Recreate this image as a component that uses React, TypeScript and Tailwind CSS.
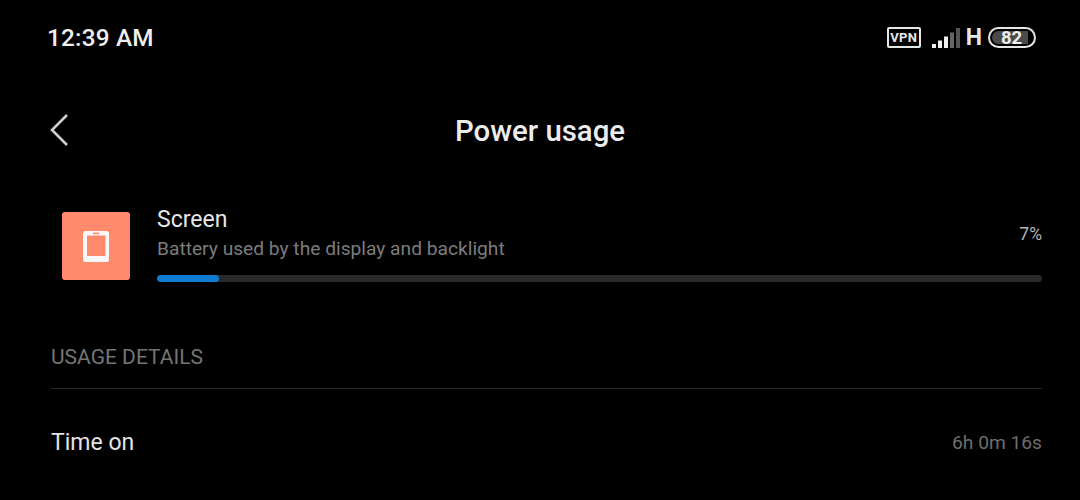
export default function App() {
  return (
    <div className="w-[1080px] h-[500px] overflow-hidden bg-black text-white flex flex-col font-['Roboto',sans-serif]">
      <div className="h-[75px] flex items-center justify-between pl-[47px] pr-[44px]">
        <span className="text-[24.3px] font-medium text-[#eeeeee] tracking-[0.2px] pt-[1px]">12:39 AM</span>
        <div className="flex items-center">
          <span className="w-[34px] h-[21px] border-2 border-[#e6e6e6] rounded-[2px] flex items-center justify-center text-[13px] font-bold text-[#e6e6e6] tracking-[0.3px]">VPN</span>
          <svg className="ml-[10px]" width="30" height="22" viewBox="0 0 30 22">
            <rect x="1" y="17" width="4" height="4" fill="#eee" />
            <rect x="7" y="13.5" width="4" height="7.5" fill="#eee" />
            <rect x="13" y="9.5" width="4" height="11.5" fill="#eee" />
            <rect x="19" y="5.5" width="4" height="15.5" fill="#666" />
            <rect x="25" y="1" width="4" height="20" fill="#555" />
          </svg>
          <span className="ml-[5px] text-[23px] leading-none font-bold text-[#e6e6e6]">H</span>
          <div className="relative ml-[6px] w-[48px] h-[21px] rounded-full border-2 border-[#e6e6e6] flex items-center p-[2px]">
            <div className="w-[36px] h-full bg-[#4a4a4a] rounded-l-full rounded-r-[2px]" />
            <span className="absolute left-[11px] top-[1px] text-[18.5px] leading-[17px] font-bold text-[#eee]">82</span>
          </div>
        </div>
      </div>

      <div className="relative h-[112px] flex items-center justify-center">
        <svg className="absolute left-[48px] top-[37px]" width="24" height="36" viewBox="0 0 24 36" fill="none">
          <path d="M19 3 L4 18 L19 33" stroke="#cfcfcf" strokeWidth="2.6" />
        </svg>
        <span className="text-[29.4px] font-medium text-[#ececec] mt-[2px] leading-none">Power usage</span>
      </div>

      <div className="flex pl-[62px] pr-[38px]">
        <div className="w-[68px] h-[68px] mt-[25px] bg-[#ff8a6c] rounded-[3px] flex items-center justify-center shrink-0">
          <svg width="26" height="31" viewBox="0 0 26 31" fill="none">
            <rect x="0" y="0" width="26" height="31" rx="2.5" fill="#f8f8f8" />
            <rect x="4" y="4.5" width="18.5" height="20.5" fill="#ff8a6c" />
            <rect x="10" y="1.6" width="6" height="1.6" fill="#ff8a6c" />
          </svg>
        </div>
        <div className="flex-1 ml-[27px] mt-[20px]">
          <div className="text-[23px] leading-[26px] text-[#e6e6e6]">Screen</div>
          <div className="flex justify-between mt-[3px]">
            <span className="text-[19.2px] leading-[26px] text-[#7c7c7c]">Battery used by the display and backlight</span>
            <span className="text-[17.5px] leading-[20px] text-[#b5b5b5] mt-[-12px]">7%</span>
          </div>
          <div className="h-[7px] mt-[13px] bg-[#2a2a2a] rounded-full overflow-hidden">
            <div className="w-[62px] h-full bg-[#0f7bd0] rounded-full" />
          </div>
        </div>
      </div>

      <div className="mt-[61px] ml-[51px] mr-[38px]">
        <div className="text-[21px] leading-[28px] text-[#757575] pb-[17px] border-b border-[#262626]">USAGE DETAILS</div>
        <div className="flex items-center justify-between mt-[40px]">
          <span className="text-[23px] leading-[28px] text-[#e4e4e4]">Time on</span>
          <span className="text-[19.2px] leading-[28px] text-[#6e6e6e]">6h 0m 16s</span>
        </div>
      </div>
    </div>
  );
}
